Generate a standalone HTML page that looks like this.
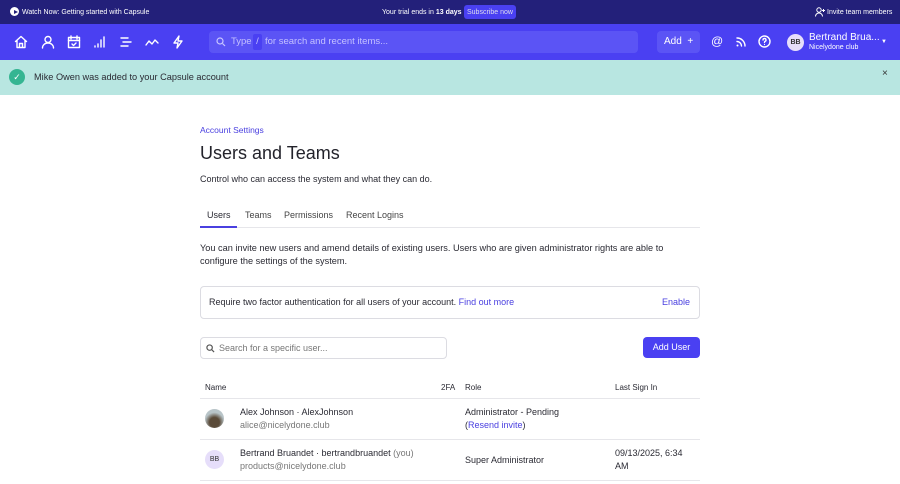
<!DOCTYPE html>
<html><head><style>
*{box-sizing:border-box;margin:0;padding:0}
body{width:900px;height:484px;overflow:hidden;font-family:"Liberation Sans",sans-serif;background:#fff;color:#2a2a33;position:relative}
.a{position:absolute}
.top{left:0;top:0;width:900px;height:24px;background:#23207a;color:#fff;font-size:7px}
.nav{left:0;top:24px;width:900px;height:36px;background:#4a40f2}
.ban{left:0;top:60px;width:900px;height:35px;background:#b8e6e1}
svg{display:block}
.ic{stroke:#fff;fill:none;stroke-width:1.4;stroke-linecap:round;stroke-linejoin:round}
.t{font-size:9px;color:#2a2a33;white-space:nowrap}
.g{color:#777}
.hr{height:1px;background:#e6e6ea;left:200px;width:500px}
.lk{color:#4a40e0}
</style></head><body>
<div class="a top">
 <div class="a" style="left:10px;top:7px;width:9px;height:9px;border-radius:50%;background:#fff"></div>
 <div class="a" style="left:13.5px;top:9.5px;width:0;height:0;border-left:4px solid #23207a;border-top:2.2px solid transparent;border-bottom:2.2px solid transparent"></div>
 <div class="a" style="left:22px;top:8.5px">Watch Now: Getting started with Capsule</div>
 <div class="a" style="left:382px;top:8.5px">Your trial ends in <b>13 days</b></div>
 <div class="a" style="left:464px;top:5px;height:14px;padding:3.5px 3px;background:#4a40f2;border-radius:3px;color:#dde">Subscribe now</div>
 <svg class="a" style="left:815px;top:7px" width="11" height="10" viewBox="0 0 11 10"><circle cx="4" cy="3" r="2.2" stroke="#fff" fill="none" stroke-width="1"/><path d="M0.5 9.5c0-2 1.5-3.5 3.5-3.5s3.5 1.5 3.5 3.5M8.5 2v3M7 3.5h3" stroke="#fff" fill="none" stroke-width="1"/></svg>
 <div class="a" style="left:827px;top:8.5px">Invite team members</div>
</div>
<div class="a nav">
 <svg class="a" style="left:14px;top:11px" width="14" height="14" viewBox="0 0 14 14"><path class="ic" d="M1.5 6.5L7 1.5l5.5 5M3 5.5v7h8v-7M5.5 12.5v-4h3v4"/></svg>
 <svg class="a" style="left:41px;top:11px" width="14" height="14" viewBox="0 0 14 14"><circle class="ic" cx="7" cy="4.5" r="3"/><path class="ic" d="M1.5 13c0-3 2.5-5 5.5-5s5.5 2 5.5 5"/></svg>
 <svg class="a" style="left:67px;top:11px" width="14" height="14" viewBox="0 0 14 14"><rect class="ic" x="1.5" y="2.5" width="11" height="10"/><path class="ic" d="M1.5 5.5h11M4 1v3M10 1v3M5 9l1.5 1.5L9 8"/></svg>
 <svg class="a" style="left:93px;top:11px" width="14" height="14" viewBox="0 0 14 14"><path class="ic" d="M2 12v-1M5 12V9M8 12V5M11 12V2"/></svg>
 <svg class="a" style="left:119px;top:11px" width="14" height="14" viewBox="0 0 14 14"><path class="ic" d="M2 3h7M4 7h8M2 11h7"/></svg>
 <svg class="a" style="left:145px;top:11px" width="14" height="14" viewBox="0 0 14 14"><path class="ic" d="M1 10l3-4 3 3 3-4 3 3"/></svg>
 <svg class="a" style="left:171px;top:11px" width="14" height="14" viewBox="0 0 14 14"><path class="ic" d="M8 1L3 8h4l-1 5 5-7H7z"/></svg>
 <div class="a" style="left:209px;top:7px;width:429px;height:22px;background:#5b54f5;border-radius:4px"></div>
 <svg class="a" style="left:216px;top:13px" width="10" height="10" viewBox="0 0 10 10"><circle cx="4" cy="4" r="3" stroke="#c8c6ff" fill="none" stroke-width="1.2"/><path d="M6.5 6.5L9 9" stroke="#c8c6ff" stroke-width="1.2"/></svg>
 <div class="a" style="left:231px;top:12px;font-size:9.5px;color:#c4c1ff">Type</div>
 <div class="a" style="left:253px;top:10px;width:9px;height:16px;background:#4a40f2;border-radius:2px;color:#c4c1ff;font-size:9.5px;text-align:center;line-height:16px">/</div>
 <div class="a" style="left:265px;top:12px;font-size:9.5px;color:#c4c1ff">for search and recent items...</div>
 <div class="a" style="left:657px;top:7px;width:43px;height:22px;background:#5b54f5;border-radius:4px;color:#fff;font-size:10px;line-height:22px;padding-left:7px">Add &nbsp;+</div>
 <div class="a" style="left:711px;top:10px;color:#fff;font-size:12px">@</div>
 <svg class="a" style="left:735px;top:12px" width="12" height="12" viewBox="0 0 12 12"><path class="ic" d="M2 2a8 8 0 0 1 8 8M2 5.5a4.5 4.5 0 0 1 4.5 4.5"/><circle cx="2.5" cy="9.5" r="1" fill="#fff"/></svg>
 <svg class="a" style="left:758px;top:11px" width="13" height="13" viewBox="0 0 13 13"><circle class="ic" cx="6.5" cy="6.5" r="5.5"/><path class="ic" d="M5 5a1.5 1.5 0 1 1 2 1.4c-.5.2-.5.6-.5 1.1"/><circle cx="6.5" cy="9.5" r=".6" fill="#fff"/></svg>
 <div class="a" style="left:787px;top:10px;width:17px;height:17px;border-radius:50%;background:#e6defa;color:#333;font-size:7px;font-weight:bold;text-align:center;line-height:17px">BB</div>
 <div class="a" style="left:809px;top:8px;color:#fff;font-size:10px">Bertrand Brua...</div>
 <div class="a" style="left:809px;top:20px;color:#fff;font-size:7px">Nicelydone club</div>
 <div class="a" style="left:881px;top:15px;color:#fff;font-size:6px">&#9660;</div>
</div>
<div class="a ban">
 <div class="a" style="left:9px;top:9px;width:16px;height:16px;border-radius:50%;background:#35b592;color:#fff;font-size:9px;text-align:center;line-height:16px">&#10003;</div>
 <div class="a t" style="left:34px;top:12px;font-size:9.2px">Mike Owen was added to your Capsule account</div>
 <div class="a" style="left:882px;top:8px;font-size:10px;color:#333">&times;</div>
</div>
<div class="a" style="left:200px;top:125px;font-size:8.5px;color:#4a40e0">Account Settings</div>
<div class="a" style="left:200px;top:143px;font-size:18px;color:#23232b">Users and Teams</div>
<div class="a t" style="left:200px;top:174px">Control who can access the system and what they can do.</div>
<div class="a t" style="left:207px;top:210px">Users</div>
<div class="a t" style="left:245px;top:210px;color:#444">Teams</div>
<div class="a t" style="left:284px;top:210px;color:#444">Permissions</div>
<div class="a t" style="left:346px;top:210px;color:#444">Recent Logins</div>
<div class="a hr" style="top:227px"></div>
<div class="a" style="left:200px;top:226px;width:37px;height:2px;background:#4a40e0"></div>
<div class="a" style="left:200px;top:242px;width:500px;font-size:9.2px;line-height:13px">You can invite new users and amend details of existing users. Users who are given administrator rights are able to configure the settings of the system.</div>
<div class="a" style="left:200px;top:286px;width:500px;height:33px;border:1px solid #dcdce2;border-radius:4px"></div>
<div class="a t" style="left:209px;top:297px">Require two factor authentication for all users of your account. <span class="lk">Find out more</span></div>
<div class="a t lk" style="left:662px;top:297px">Enable</div>
<div class="a" style="left:200px;top:337px;width:247px;height:22px;border:1px solid #dcdce2;border-radius:4px"></div>
<svg class="a" style="left:206px;top:344px" width="9" height="9" viewBox="0 0 10 10"><circle cx="4" cy="4" r="3" stroke="#555" fill="none" stroke-width="1.3"/><path d="M6.5 6.5L9 9" stroke="#555" stroke-width="1.3"/></svg>
<div class="a t" style="left:219px;top:343px;color:#777">Search for a specific user...</div>
<div class="a" style="left:643px;top:337px;width:57px;height:21px;background:#4a40f2;border-radius:4px;color:#fff;font-size:9px;line-height:21px;text-align:center">Add User</div>
<div class="a t" style="left:205px;top:383px;font-size:8px">Name</div>
<div class="a t" style="left:441px;top:383px;font-size:8px">2FA</div>
<div class="a t" style="left:465px;top:383px;font-size:8px">Role</div>
<div class="a t" style="left:615px;top:383px;font-size:8px">Last Sign In</div>
<div class="a hr" style="top:398px"></div>
<div class="a" style="left:205px;top:409px;width:19px;height:19px;border-radius:50%;background:radial-gradient(circle at 50% 70%,#5a4a38 30%,#b8c4c8 60%)"></div>
<div class="a t" style="left:240px;top:407px">Alex Johnson · AlexJohnson</div>
<div class="a t g" style="left:240px;top:420px">alice@nicelydone.club</div>
<div class="a t" style="left:465px;top:407px">Administrator - Pending</div>
<div class="a t" style="left:465px;top:420px">(<span class="lk">Resend invite</span>)</div>
<div class="a hr" style="top:439px"></div>
<div class="a" style="left:205px;top:450px;width:19px;height:19px;border-radius:50%;background:#e6defa;font-size:7px;line-height:19px;text-align:center;color:#333">BB</div>
<div class="a t" style="left:240px;top:448px">Bertrand Bruandet · bertrandbruandet <span class="g">(you)</span></div>
<div class="a t g" style="left:240px;top:461px">products@nicelydone.club</div>
<div class="a t" style="left:465px;top:455px">Super Administrator</div>
<div class="a t" style="left:615px;top:448px">09/13/2025, 6:34</div>
<div class="a t" style="left:615px;top:461px">AM</div>
<div class="a hr" style="top:480px"></div>
</body></html>
